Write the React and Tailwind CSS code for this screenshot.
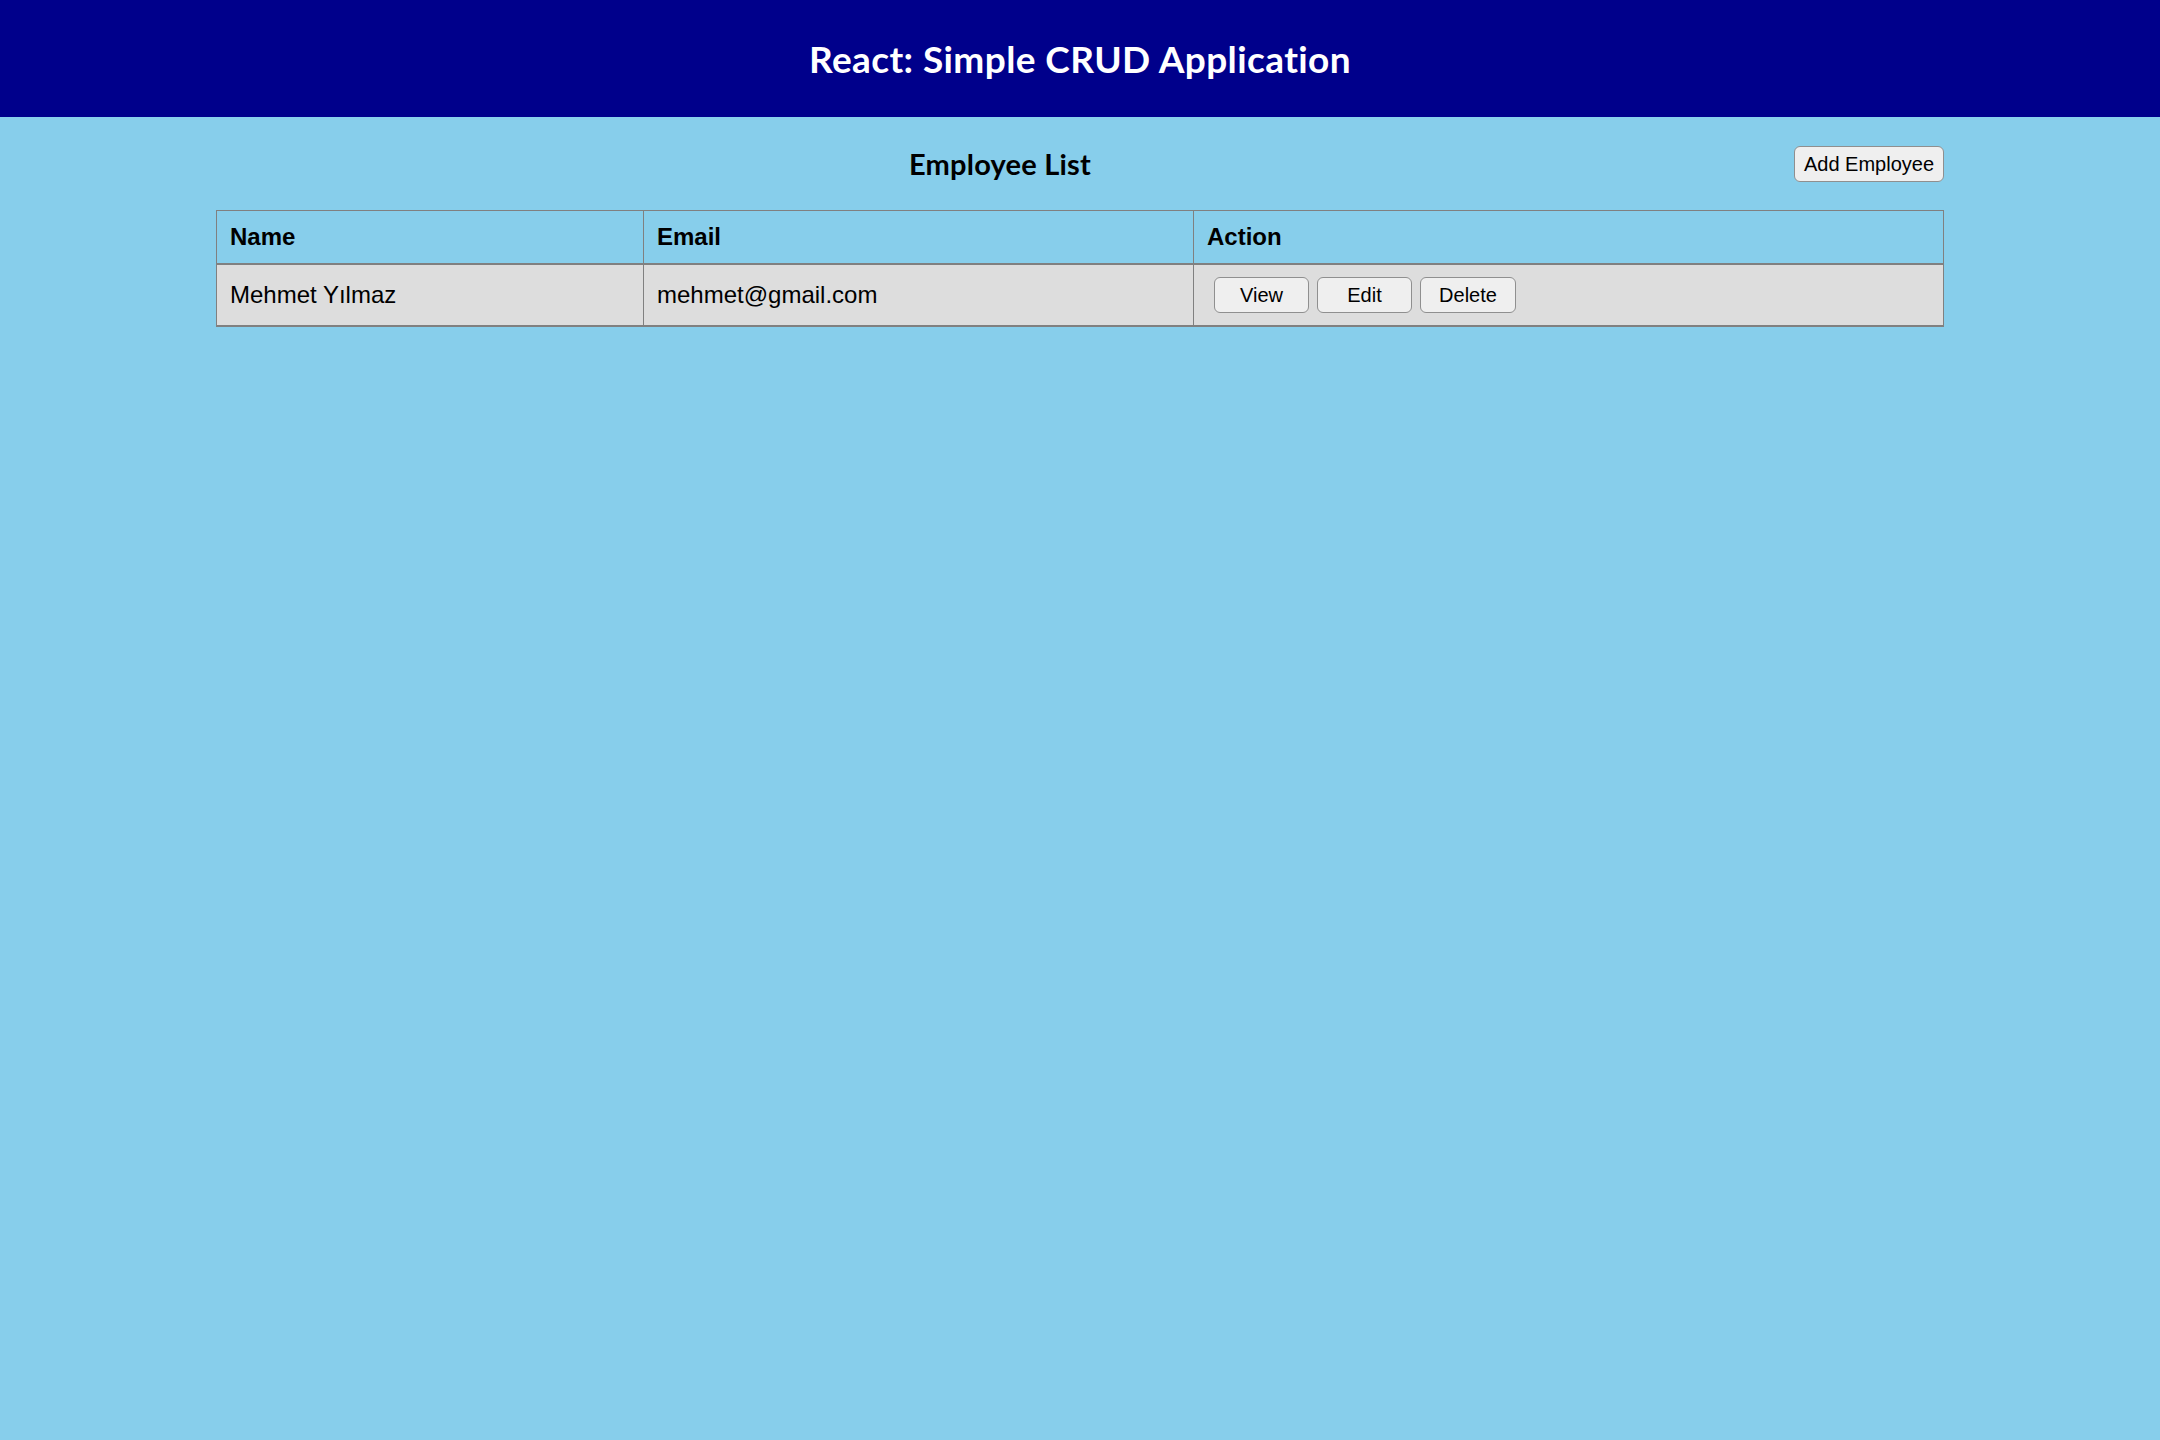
const employees = [{ id: 1, name: "Mehmet Yılmaz", email: "mehmet@gmail.com" }];

const btn =
  "h-[36px] rounded-[6px] border border-[#8f8f8f] bg-[#efefef] text-[20px] text-black font-['Liberation_Sans',Arial,sans-serif] leading-none";

export default function App() {
  return (
    <div className="min-h-screen bg-[#87ceeb]">
      <header className="flex h-[117px] items-center justify-center bg-[#00008b]">
        <h1 className="font-['Lato',sans-serif] text-[37px] font-bold leading-none tracking-[0.4px] text-white">
          React: Simple CRUD Application
        </h1>
      </header>

      <main className="mx-auto w-[80%]">
        <div className="flex h-[93px] items-center">
          <h3 className="flex-1 pr-[10px] text-center font-['Lato',sans-serif] text-[29px] font-bold leading-none tracking-[0.2px] text-black">
            Employee List
          </h3>
          <button className={`${btn} w-[150px]`}>Add Employee</button>
        </div>

        <table className="w-full border-collapse border border-b-2 border-[#808080] font-['Liberation_Sans',Arial,sans-serif] text-[24px] leading-[1.15] text-black">
          <thead>
            <tr className="border-b-2 border-[#808080]">
              <th className="w-[427px] border border-[#808080] px-[13px] py-[12px] text-left font-bold">Name</th>
              <th className="w-[550px] border border-[#808080] px-[13px] py-[12px] text-left font-bold">Email</th>
              <th className="border border-[#808080] px-[13px] py-[12px] text-left font-bold">Action</th>
            </tr>
          </thead>
          <tbody>
            {employees.map((e) => (
              <tr key={e.id} className="bg-[#dddddd]">
                <td className="border border-[#808080] px-[13px] py-[12px]">{e.name}</td>
                <td className="border border-[#808080] px-[13px] py-[12px]">{e.email}</td>
                <td className="border border-[#808080] py-[12px] pl-[20px] pr-[12px]">
                  <div className="flex gap-[8px]">
                    <button className={`${btn} w-[95px]`}>View</button>
                    <button className={`${btn} w-[95px]`}>Edit</button>
                    <button className={`${btn} w-[96px]`}>Delete</button>
                  </div>
                </td>
              </tr>
            ))}
          </tbody>
        </table>
      </main>
    </div>
  );
}
